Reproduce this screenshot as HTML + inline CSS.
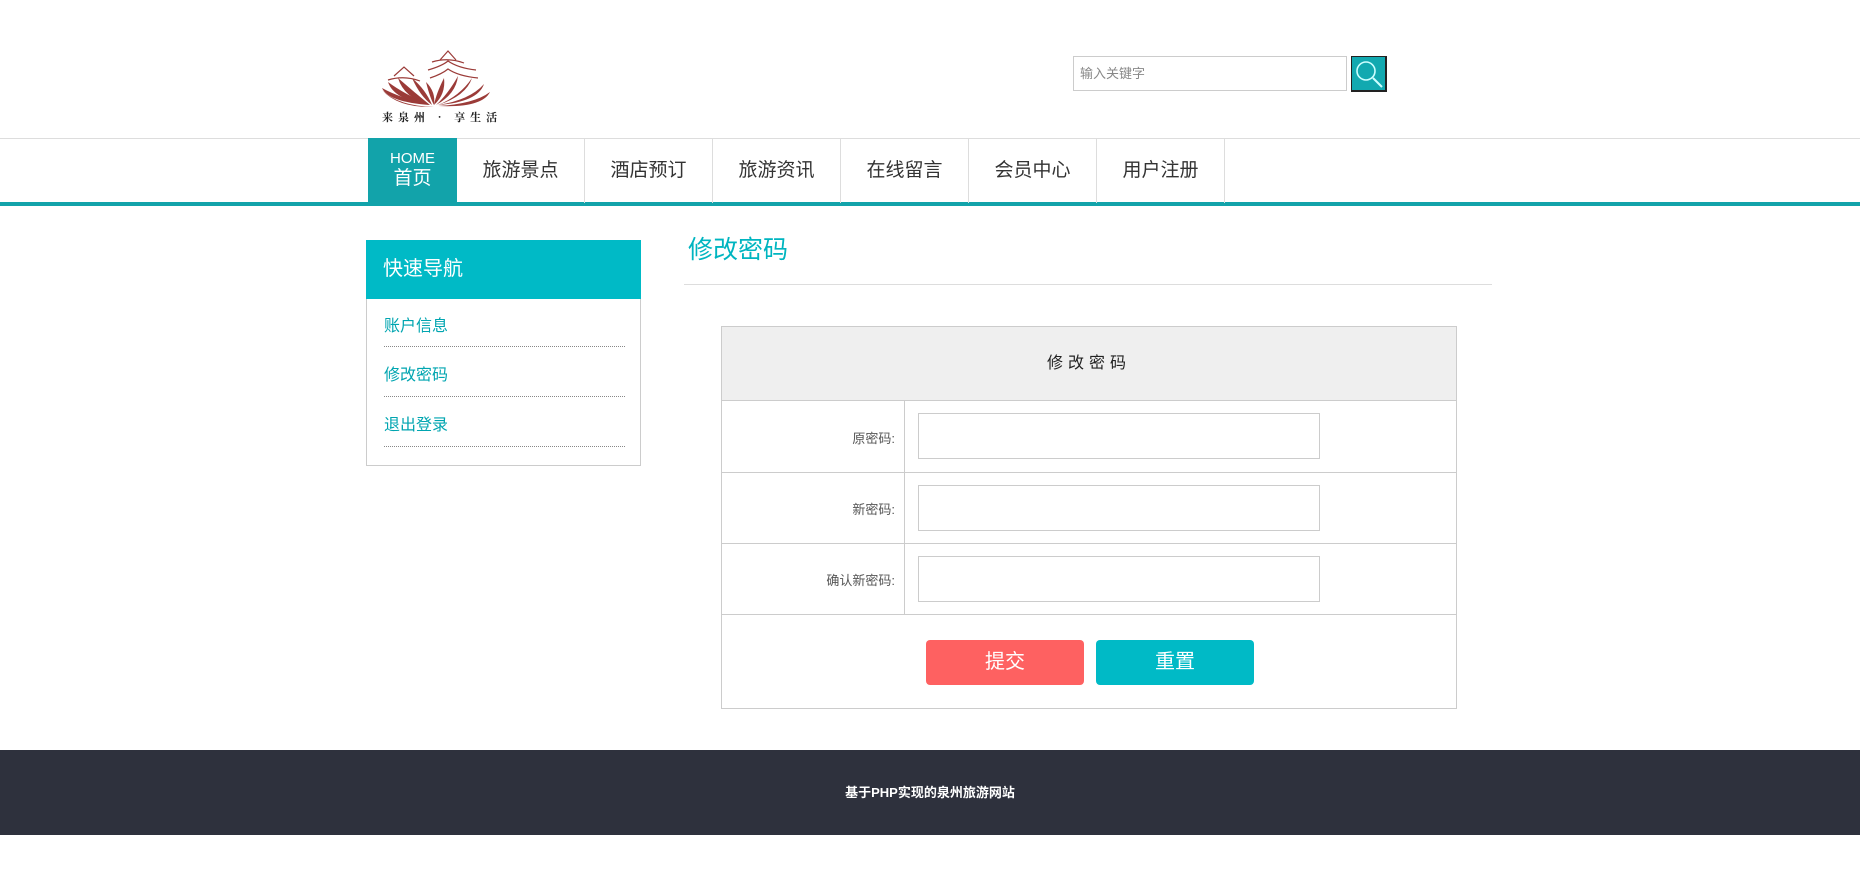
<!DOCTYPE html>
<html><head><meta charset="utf-8"><style>
*{margin:0;padding:0;box-sizing:border-box}
body{width:1860px;height:889px;background:#fff;font-family:"Liberation Sans","Noto Sans CJK SC",sans-serif;position:relative;overflow:hidden}
.a{position:absolute}
.nav a{position:absolute;top:0;height:64px;line-height:64px;text-align:center;font-size:19px;color:#333;border-right:1px solid #ddd;width:128px}
.lbl{position:absolute;left:0;width:183px;text-align:right;font-size:13px;color:#555;padding-right:10px}
.inp{position:absolute;left:196px;width:402px;height:46px;border:1px solid #ccc;background:#fff}
.side{position:absolute;left:17px;font-size:16px;color:#00a5b0}
.dot{position:absolute;left:17px;width:241px;border-top:1px dotted #888}
</style></head><body>
<svg class="a" style="left:378px;top:48px" width="140" height="64" viewBox="0 0 140 64">
<g fill="none" stroke="#9b3b38" stroke-width="1.2">
<path d="M62 12 L70 3 L78 12 M54 14 Q70 9 86 15"/>
<path d="M50 22 Q64 18 70 13 Q80 20 98 22"/>
<path d="M52 30 Q64 26 70 21 Q80 28 100 30"/>
<path d="M16 28 L26 19 L36 28 M10 32 Q26 27 42 33"/>
</g>
<g fill="#9b3b38">
<path d="M4 40 Q10 54 52 57 Q22 50 4 40Z"/>
<path d="M10 34 Q16 52 52 57 Q26 46 10 34Z"/>
<path d="M20 30 Q26 50 52 57 Q36 44 20 30Z"/>
<path d="M34 30 Q42 48 54 57 Q48 42 34 30Z"/>
<path d="M48 34 Q52 50 56 57 Q58 44 48 34Z"/>
<path d="M66 30 Q58 46 56 57 Q68 46 66 30Z"/>
<path d="M80 28 Q70 46 58 57 Q78 46 80 28Z"/>
<path d="M94 30 Q82 48 60 57 Q88 48 94 30Z"/>
<path d="M106 36 Q92 52 60 57 Q100 54 106 36Z"/>
<path d="M112 44 Q96 56 60 58 Q104 60 112 44Z"/>
<path d="M4 42 Q20 60 56 59 Q20 58 4 42Z"/>
</g>
</svg>
<div class="a" style="left:382px;top:109px;font-size:11px;color:#222;letter-spacing:5px;font-family:'Noto Serif CJK SC',serif;font-weight:bold">来泉州 · 享生活</div>
<div class="a" style="left:1073px;top:56px;width:274px;height:35px;border:1px solid #ccc;font-size:13px;color:#888;line-height:33px;padding-left:6px">输入关键字</div>
<div class="a" style="left:1351px;top:56px;width:36px;height:36px;background:#12a9b0;border:2px solid #222;border-left-width:1px;border-top-width:1px">
<svg width="34" height="34" viewBox="0 0 34 34"><circle cx="14" cy="14" r="9" fill="none" stroke="#cff" stroke-width="1.6"/><path d="M21 21 L30 30" stroke="#cff" stroke-width="2"/></svg></div>
<div class="a" style="left:0;top:138px;width:1860px;height:1px;background:#ddd"></div>
<div class="a" style="left:0;top:202px;width:1860px;height:4px;background:#12a3aa"></div>
<div class="a" style="left:368px;top:138px;width:89px;height:64px;background:#12a3aa;color:#fff;text-align:center">
<div style="font-size:15px;margin-top:13px;line-height:16px">HOME</div><div style="font-size:19px;line-height:24px">首页</div></div>
<div class="a nav" style="left:457px;top:139px">
<a style="left:0">旅游景点</a><a style="left:128px">酒店预订</a><a style="left:256px">旅游资讯</a><a style="left:384px">在线留言</a><a style="left:512px">会员中心</a><a style="left:640px">用户注册</a>
</div>
<div class="a" style="left:366px;top:240px;width:275px;height:226px;border:1px solid #ccc;border-top:none">
<div style="height:59px;background:#00bac6;color:#fff;font-size:20px;line-height:59px;padding-left:17px;margin:0 -1px">快速导航</div>
<div class="side" style="top:72px">账户信息</div><div class="dot" style="top:106px"></div>
<div class="side" style="top:121px">修改密码</div><div class="dot" style="top:156px"></div>
<div class="side" style="top:171px">退出登录</div><div class="dot" style="top:206px"></div>
</div>
<div class="a" style="left:688px;top:230px;font-size:25px;color:#00b5c0">修改密码</div>
<div class="a" style="left:684px;top:284px;width:808px;height:1px;background:#ddd"></div>
<div class="a" style="left:721px;top:326px;width:736px;height:383px;border:1px solid #ccc">
<div class="a" style="left:0;top:0;width:734px;height:74px;background:#efefef;border-bottom:1px solid #ccc;text-align:center;line-height:74px;font-size:16px;letter-spacing:5px;color:#222">修改密码</div>
<div class="a" style="left:182px;top:74px;width:1px;height:214px;background:#ccc"></div>
<div class="a" style="left:0;top:145px;width:734px;height:1px;background:#ccc"></div>
<div class="a" style="left:0;top:216px;width:734px;height:1px;background:#ccc"></div>
<div class="a" style="left:0;top:287px;width:734px;height:1px;background:#ccc"></div>
<div class="lbl" style="top:101px">原密码:</div><div class="inp" style="top:86px"></div>
<div class="lbl" style="top:172px">新密码:</div><div class="inp" style="top:158px"></div>
<div class="lbl" style="top:243px">确认新密码:</div><div class="inp" style="top:229px"></div>
<div class="a" style="left:204px;top:313px;width:158px;height:45px;background:#fe6161;border-radius:4px;color:#fff;font-size:20px;text-align:center;line-height:45px">提交</div>
<div class="a" style="left:374px;top:313px;width:158px;height:45px;background:#00bac6;border-radius:4px;color:#fff;font-size:20px;text-align:center;line-height:45px">重置</div>
</div>
<div class="a" style="left:0;top:750px;width:1860px;height:85px;background:#2e313d;color:#fff;font-size:13px;font-weight:bold;text-align:center;line-height:85px">基于PHP实现的泉州旅游网站</div>
</body></html>
